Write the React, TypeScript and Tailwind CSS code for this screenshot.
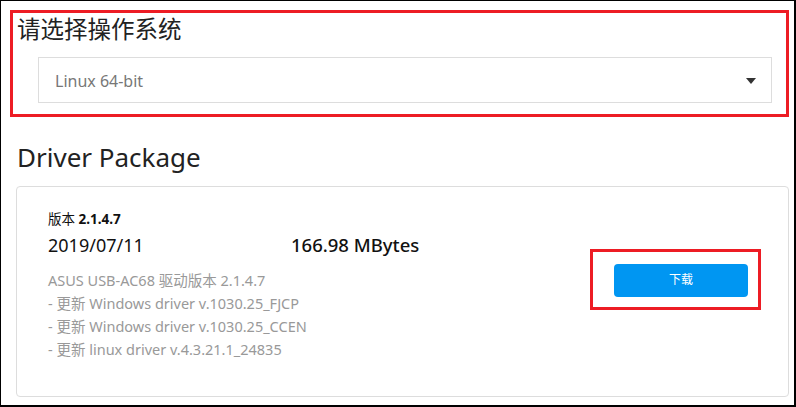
const font = { fontFamily: '"Noto Sans", "Noto Sans CJK SC", sans-serif' }

const notes = [
  'ASUS USB-AC68 驱动版本 2.1.4.7',
  '- 更新 Windows driver v.1030.25_FJCP',
  '- 更新 Windows driver v.1030.25_CCEN',
  '- 更新 linux driver v.4.3.21.1_24835',
]

const App = () => {
  return (
    <div
      className="w-[796px] h-[407px] bg-white border-l border-t border-r-2 border-b-2 border-black overflow-hidden"
      style={font}
    >
      <div className="ml-[9px] mt-[9px] w-[779px] h-[107px] border-[3px] border-[#ed1c24] flex flex-col">
        <h2 className="pl-[4px] pt-[1px] text-[23.5px] leading-[30px] text-[#222]">请选择操作系统</h2>
        <div className="ml-[25px] mr-[14px] mt-[13px] h-[46px] border border-[#ddd] flex items-center justify-between pl-[16px] pr-[15px]">
          <span className="text-[16px] leading-[20px] pt-[2px] text-[#777]">Linux 64-bit</span>
          <svg width="10" height="6" viewBox="0 0 10 6" className="mt-[2px]">
            <path d="M0 0H10L5 6Z" fill="#333" />
          </svg>
        </div>
      </div>
      <h2 className="ml-[16px] mt-[22px] text-[26px] leading-[36px] text-[#222]">Driver Package</h2>
      <div className="ml-[15px] mt-[11px] w-[773px] h-[211px] border border-[#ddd] rounded-[4px] flex items-start justify-between pl-[31px] pr-[27px]">
        <div className="flex flex-col pt-[23px]">
          <p className="text-[13.5px] leading-[18px] text-[#111]">
            版本 <span className="font-bold">2.1.4.7</span>
          </p>
          <div className="mt-[5px] flex text-[18px] leading-[24px] text-[#111]">
            <span className="w-[243px]">2019/07/11</span>
            <span className="font-medium text-[18.5px]">166.98 MBytes</span>
          </div>
          <div className="mt-[12px] flex flex-col">
            {notes.map((n) => (
              <span key={n} className="text-[14.5px] leading-[23px] text-[#999]">
                {n}
              </span>
            ))}
          </div>
        </div>
        <div className="mt-[62px] border-[3px] border-[#ed1c24] w-[171px] h-[61px] flex items-center pl-[21px] pt-[1px]">
          <button className="w-[134px] h-[33px] rounded-[4px] bg-[#0096f2] text-white text-[12px]">下载</button>
        </div>
      </div>
    </div>
  )
}

export default App
